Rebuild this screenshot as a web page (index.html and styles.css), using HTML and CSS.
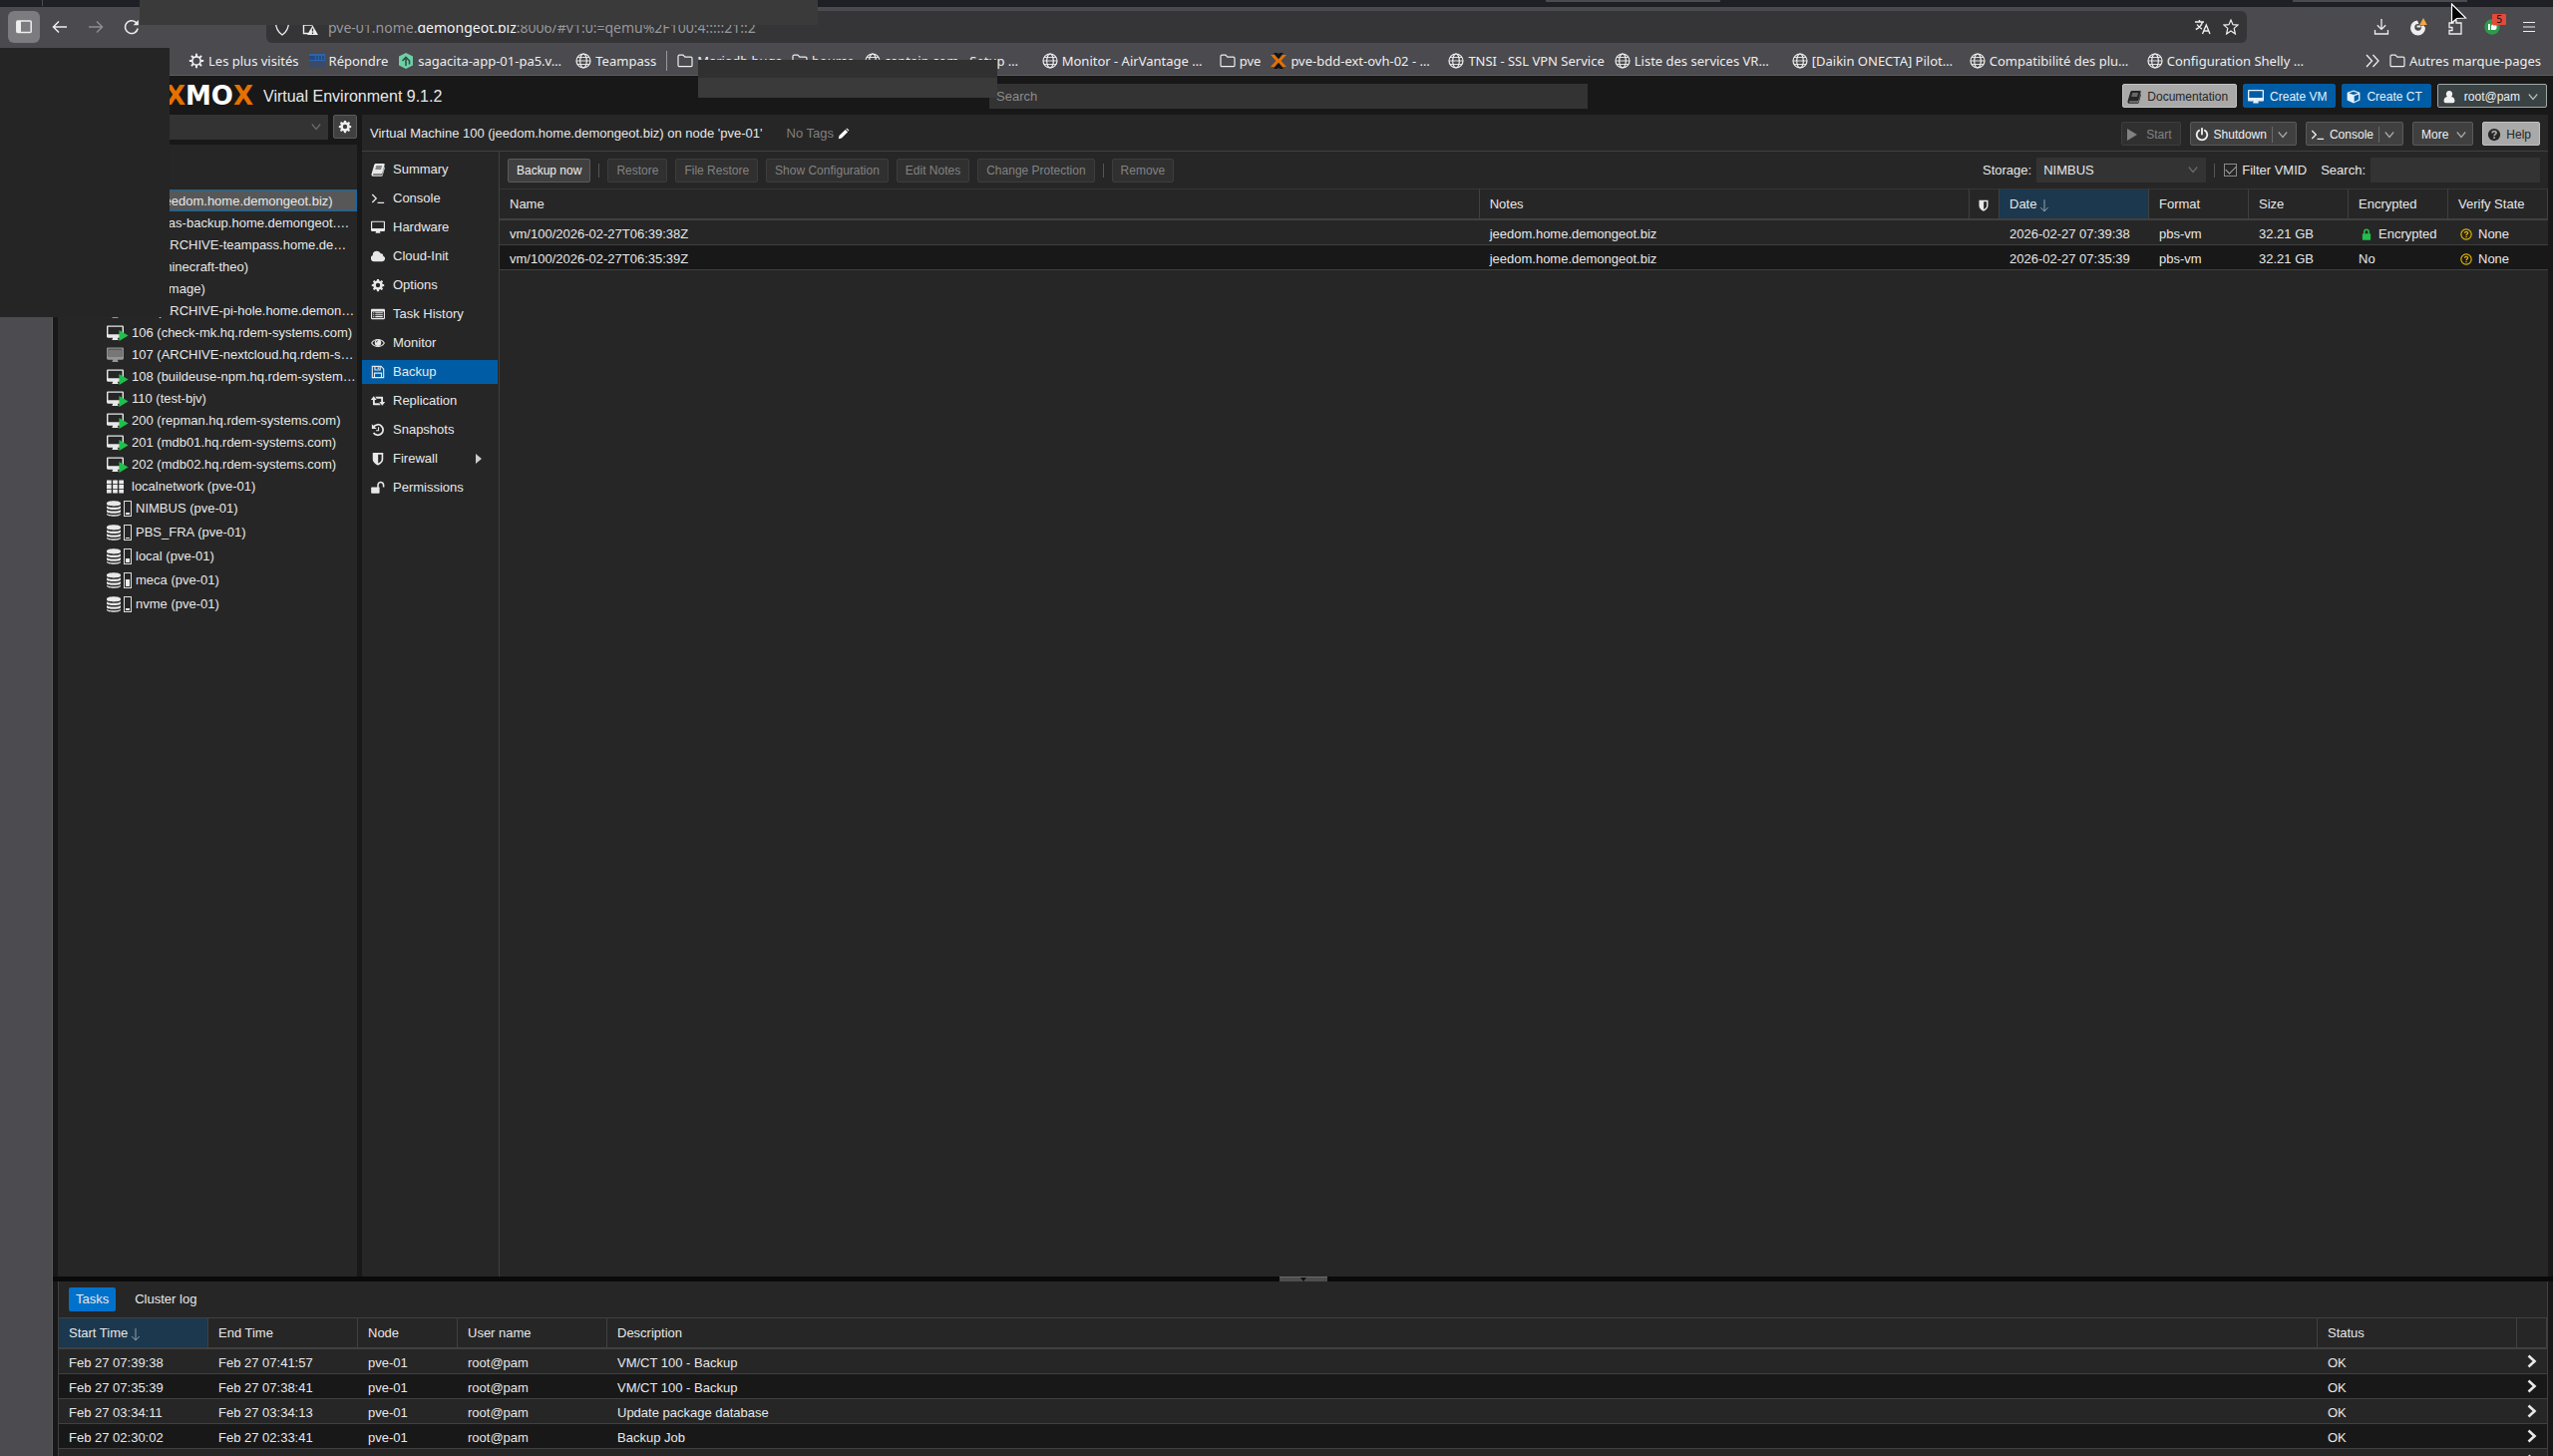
FILE: index.html
```html
<!DOCTYPE html>
<html lang="en">
<head>
<meta charset="utf-8">
<title>pve-01 - Proxmox Virtual Environment</title>
<link rel="stylesheet" href="styles.css">
</head>
<body>
<svg class="sprite" aria-hidden="true">
  <symbol id="globe" viewBox="0 0 16 16"><g fill="none" stroke="currentColor" stroke-width="1.2"><circle cx="8" cy="8" r="7"/><ellipse cx="8" cy="8" rx="3.3" ry="7"/><path d="M1 8h14M2 4.5h12M2 11.500h12" stroke-width=".9"/></g></symbol>
  <symbol id="folder" viewBox="0 0 16 16"><path d="M1 3.500a1.300 1.300 0 0 1 1.300-1.300H6l1.800 1.900h5.800A1.300 1.300 0 0 1 15 5.400v7a1.300 1.300 0 0 1-1.300 1.300H2.300A1.300 1.300 0 0 1 1 12.400z" fill="none" stroke="currentColor" stroke-width="1.200"/></symbol>
  <symbol id="gear-line" viewBox="0 0 16 16"><g fill="none" stroke="currentColor"><circle cx="8" cy="8" r="4.200" stroke-width="1.700"/><path d="M8 .8v3M8 12.200v3M.8 8h3M12.200 8h3M2.900 2.900l2.100 2.100M11 11l2.100 2.100M2.900 13.100L5 11M11 5l2.100-2.100" stroke-width="2"/></g></symbol>
  <symbol id="gear" viewBox="0 0 16 16"><path fill="currentColor" fill-rule="evenodd" d="M6.900 1h2.200l.4 1.900 1.200.5 1.600-1.100 1.500 1.500-1.100 1.600.5 1.200 1.900.4v2.100l-1.900.4-.5 1.200 1.100 1.600-1.500 1.500-1.600-1.100-1.200.5-.4 1.900H6.900l-.4-1.900-1.200-.5-1.600 1.100-1.500-1.500 1.100-1.600-.5-1.200L.9 9.100V7l1.900-.4.5-1.200-1.100-1.600 1.500-1.500 1.600 1.100 1.200-.5zM8 5.500a2.500 2.500 0 1 0 0 5 2.500 2.500 0 0 0 0-5z"/></symbol>
  <symbol id="book" viewBox="0 0 16 16"><path fill="currentColor" fill-rule="evenodd" d="M5.600 1.200h9c.8 0 1.200.6 1 1.300l-2.500 9.600c-.2.700-.8 1.100-1.500 1.100H3c-.4 0-.8.2-.8.600s.3.500.7.500h8.900c.7 0 1.100-.4 1.300-1l2.200-8.500c.5.400.6.900.5 1.400l-2.300 8.200c-.2.800-1 1.400-1.800 1.400H2.900C1.300 15.800.2 14.400.6 13L3.500 3C3.800 1.900 4.600 1.200 5.600 1.200zM6 4l-.3 1h6.600l.3-1zm-.7 2.300-.3 1h6.600l.3-1z"/></symbol>
  <symbol id="terminal" viewBox="0 0 16 16"><path d="M1.500 3.500 6 8l-4.500 4.500M7.500 13H15" fill="none" stroke="currentColor" stroke-width="1.500"/></symbol>
  <symbol id="screen" viewBox="0 0 18 16"><path fill="currentColor" fill-rule="evenodd" d="M1.300 0h15.400c.7 0 1.300.6 1.300 1.300v10.500c0 .7-.6 1.200-1.300 1.200h-5.200c0 .9.700 1.100.7 1.800 0 .3-.2.600-.5.600h-5.400c-.3 0-.5-.3-.5-.6 0-.7.700-.9.700-1.800H1.300C.6 13 0 12.500 0 11.800V1.300C0 .6.600 0 1.300 0zm.2 1.400v7.800h15V1.400z"/></symbol>
  <symbol id="screen-full" viewBox="0 0 18 16"><path fill="#777" d="M2 2h14v8H2z"/><path fill="currentColor" fill-rule="evenodd" d="M1.300 0h15.400c.7 0 1.300.6 1.300 1.300v10.500c0 .7-.6 1.200-1.300 1.200h-5.200c0 .9.700 1.100.7 1.800 0 .3-.2.600-.5.600h-5.400c-.3 0-.5-.3-.5-.6 0-.7.700-.9.700-1.800H1.300C.6 13 0 12.500 0 11.800V1.300C0 .6.600 0 1.300 0zm.4 1.500v8.400h14.600V1.500z"/></symbol>
  <symbol id="play" viewBox="0 0 10 12"><path fill="currentColor" d="M0 0l10 6-10 6z"/></symbol>
  <symbol id="cloud" viewBox="0 0 16 16"><path fill="currentColor" d="M3.700 14A3.700 3.700 0 0 1 2 6.900 4.800 4.800 0 0 1 11.200 4.900c1.900-.3 3 1 2.700 2.700A3.300 3.300 0 0 1 13 14z"/></symbol>
  <symbol id="list" viewBox="0 0 16 16"><path fill="currentColor" fill-rule="evenodd" d="M1.300 2h13.400c.7 0 1.300.6 1.300 1.300v9.400c0 .7-.6 1.300-1.300 1.300H1.300C.6 14 0 13.400 0 12.700V3.300C0 2.600.6 2 1.300 2zm0 3v7.700h13.400V5zM2.500 6h1.300v1.200H2.500zm2.400 0h8.600v1.200H4.900zM2.500 8.200h1.300v1.200H2.500zm2.400 0h8.600v1.200H4.900zM2.500 10.400h1.300v1.200H2.500zm2.400 0h8.600v1.200H4.900z"/></symbol>
  <symbol id="eye" viewBox="0 0 16 16"><path d="M.8 8C4 2.700 12 2.700 15.200 8 12 13.300 4 13.300.8 8z" fill="none" stroke="currentColor" stroke-width="1.300"/><circle cx="8" cy="7.600" r="3.700" fill="currentColor"/><path d="M6 7.300a2 2 0 0 1 2-2" fill="none" stroke="#262626" stroke-width=".9"/></symbol>
  <symbol id="floppy" viewBox="0 0 16 16"><path d="M1.500 1.500h10l3 3v10h-13zM4 14.500V9.300h8v5.200M4.500 1.500v4.200h6V1.500M8.300 2.500v2" fill="none" stroke="currentColor" stroke-width="1.300"/></symbol>
  <symbol id="retweet" viewBox="0 0 18 16"><path fill="currentColor" d="M3.500 2 7.300 6.700H4.900v4.100h5.800L12.500 13.400H3.300c-.4 0-.8-.3-.8-.8V6.700H-.2zM14.500 14 10.700 9.300h2.400V5.200H7.300L5.500 2.600h9.200c.4 0 .8.300.8.800v5.900h2.700z"/></symbol>
  <symbol id="history" viewBox="0 0 16 16"><path d="M3.200 4.200a6 6 0 1 1-.3 7.200" fill="none" stroke="currentColor" stroke-width="2"/><path d="M1 1.300v5.500h5.500z" fill="currentColor"/><path d="M8.600 4.800v4H5.800" fill="none" stroke="currentColor" stroke-width="1.300"/></symbol>
  <symbol id="shield" viewBox="0 0 16 16"><path fill="currentColor" fill-rule="evenodd" d="M2 1h12v7.500c0 3.500-3.500 5.800-6 7-2.500-1.200-6-3.500-6-7zm6.200 2v10.200c2-1 3.900-2.700 3.900-4.700V3z"/></symbol>
  <symbol id="unlock" viewBox="0 0 16 16"><path fill="currentColor" d="M1 7.500h8.800v6.200c0 .5-.4.800-.8.800H1c-.5 0-.8-.3-.8-.8V8.300c0-.5.300-.8.800-.8z"/><path d="M8 8V5a3.200 3.200 0 0 1 6.400 0v2.500" fill="none" stroke="currentColor" stroke-width="1.800"/></symbol>
  <symbol id="lock" viewBox="0 0 16 16"><rect x="2.500" y="7" width="11" height="8.500" rx=".8" fill="currentColor"/><path d="M5 7.500V4.700a3 3 0 0 1 6 0v2.800" fill="none" stroke="currentColor" stroke-width="2"/></symbol>
  <symbol id="grid" viewBox="0 0 18 16"><path fill="currentColor" d="M0 1h5v4H0zM6.500 1h5v4h-5zM13 1h5v4h-5zM0 6h5v4H0zM6.500 6h5v4h-5zM13 6h5v4h-5zM0 11h5v4H0zM6.500 11h5v4h-5zM13 11h5v4h-5z"/></symbol>
  <symbol id="db" viewBox="0 0 14 16"><path fill="currentColor" d="M0 2.500C0-.5 14-.5 14 2.500v1C14 6 0 6 0 3.500zM0 5.300c1.500 2 12.500 2 14 0v1.900c0 2.500-14 2.500-14 0zM0 9c1.500 2 12.500 2 14 0v1.900c0 2.500-14 2.500-14 0zM0 12.700c1.500 2 12.500 2 14 0v.9c0 3-14 3-14 0z"/></symbol>
  <symbol id="cube" viewBox="0 0 16 16"><path fill="currentColor" fill-rule="evenodd" d="M8 .5 15.300 3v9L8 15.500.7 12V3zM8 2 2.800 3.900 8 5.800l5.200-1.900zm.8 5.200v6.400l5-2.400V5.300z"/></symbol>
  <symbol id="user" viewBox="0 0 16 16"><path fill="currentColor" d="M8 1c2.200 0 3.600 1.600 3.600 3.800 0 1.300-.5 2.500-1.300 3.200 2.700.3 3.900 1.800 3.900 4.800 0 1.400-.8 2.200-2.200 2.200H4c-1.400 0-2.200-.8-2.200-2.200 0-3 1.200-4.500 3.900-4.800-.8-.7-1.300-1.900-1.300-3.200C4.400 2.600 5.800 1 8 1z"/></symbol>
  <symbol id="power" viewBox="0 0 16 16"><path d="M4.700 3.200a6 6 0 1 0 6.600 0M8 1v6.500" fill="none" stroke="currentColor" stroke-width="2.100" stroke-linecap="round"/></symbol>
  <symbol id="chevron" viewBox="0 0 10 10"><path d="M.8 2.500 5 7.500l4.200-5" fill="none" stroke="currentColor" stroke-width="1.200"/></symbol>
  <symbol id="help" viewBox="0 0 16 16"><circle cx="8" cy="8" r="7" fill="currentColor"/><path d="M5.700 6.200c.2-2.800 4.700-2.700 4.700-.2 0 1.700-2.300 1.500-2.300 3.300M8.100 10.500v2" fill="none" stroke="#a9a9a9" stroke-width="1.900"/></symbol>
  <symbol id="query" viewBox="0 0 16 16"><circle cx="8" cy="8" r="6.900" fill="none" stroke="currentColor" stroke-width="1.500"/><path d="M5.800 6.400c.2-2.500 4.400-2.400 4.400-.2 0 1.500-2.100 1.400-2.100 3.100M8.100 10.400v1.800" fill="none" stroke="currentColor" stroke-width="1.600"/></symbol>
  <symbol id="pencil" viewBox="0 0 16 16"><path fill="currentColor" d="M1 15l1-4.200L10.300 2.500l3.200 3.200L5.200 14zM11.200 1.600c.8-.8 1.400-.8 2 0l1.300 1.200c.7.700.7 1.300 0 2z"/></symbol>
  <symbol id="sort" viewBox="0 0 12 16"><path d="M6 1v14M1.500 10.500 6 15l4.500-4.500" fill="none" stroke="currentColor"/></symbol>
  <symbol id="next" viewBox="0 0 10 14"><path d="M1.500 1.500 7.500 7l-6 5.500" fill="none" stroke="currentColor" stroke-width="2.600"/></symbol>
</svg>

<div class="window">
  <header class="browser">
    <div class="tabstrip"><i class="tab-mark"></i><i class="tab-edge"></i><i class="tab-edge far"></i></div>
    <div class="toolbar">
      <nav class="tools">
        <button class="tool active" aria-label="Sidebar"><svg width="16" height="16" viewBox="0 0 16 16"><rect x=".8" y="2" width="14.400" height="11.500" rx="1" fill="none" stroke="currentColor" stroke-width="1.500"/><path d="M1 2h4v11.500H1z" fill="currentColor"/></svg></button>
        <button class="tool" aria-label="Back"><svg width="16" height="16" viewBox="0 0 16 16"><path d="M15 8H1.500M7 2.500 1.500 8 7 13.500" fill="none" stroke="currentColor" stroke-width="1.500"/></svg></button>
        <button class="tool dim" aria-label="Forward"><svg width="16" height="16" viewBox="0 0 16 16"><path d="M1 8h13.500M9 2.500 14.500 8 9 13.500" fill="none" stroke="currentColor" stroke-width="1.500"/></svg></button>
        <button class="tool" aria-label="Reload"><svg width="16" height="16" viewBox="0 0 16 16"><path d="M14.200 9.500A6.400 6.400 0 1 1 12 3.200l1.600 1.600" fill="none" stroke="currentColor" stroke-width="1.500"/><path d="M14.800 1v5.200H9.600z" fill="currentColor"/></svg></button>
      </nav>
      <div class="urlbar">
        <svg width="16" height="18" viewBox="0 0 16 18"><path d="M1.500 4 8 1.500 14.500 4c0 6-2 10-6.500 13C3.500 14 1.500 10 1.500 4z" fill="none" stroke="currentColor" stroke-width="1.300"/></svg>
        <svg class="site-lock" width="16" height="18" viewBox="0 0 16 18"><path d="M4 7V4a3 3 0 0 1 6 0v3M6 15.500H1.500V7h9" fill="none" stroke="currentColor" stroke-width="1.400"/><path d="M10.500 7.500 16 17H5z" fill="currentColor"/><path d="M10.500 10.500v3M10.500 14.500v1.500" stroke="#38383a" stroke-width="1.300"/></svg>
        <span class="url" role="textbox" aria-label="Address">pve-01.home.<b>demongeot.biz</b>:8006/#v1:0:=qemu%2F100:4:::::21::2</span>
        <button class="url-tool" aria-label="Translate"><svg width="16" height="16" viewBox="0 0 16 16"><path d="M0 3h9M4.500 1v2M7.500 3C6.500 6.500 4 9 .8 10.500M2 5.500C3.500 8 5 9 7 10M7.500 15 11.300 6l3.700 9M9 12h5" fill="none" stroke="currentColor" stroke-width="1.400"/></svg></button>
        <button class="url-tool" aria-label="Bookmark"><svg width="16" height="16" viewBox="0 0 16 16"><path d="M8 1l2 4.700 5 .4-3.800 3.300L12.400 15 8 12l-4.400 3 1.200-5.600L1 6.100l5-.4z" fill="none" stroke="currentColor" stroke-width="1.200"/></svg></button>
      </div>
      <nav class="tools exts">
        <button class="tool" aria-label="Downloads"><svg width="16" height="16" viewBox="0 0 16 16"><path d="M8 0v10M3.800 6.200 8 10.400l4.200-4.200M1.500 11v4h13v-4" fill="none" stroke="currentColor" stroke-width="1.300"/></svg></button>
        <button class="tool" aria-label="Extension"><svg width="18" height="18" viewBox="0 0 18 18"><path d="M8 2.500a7.500 7.500 0 1 0 8 7.500l-1.500-2.500-2.500.2c.6 3-1 5-3.500 5S4.800 10.500 5.500 8c.3-1.500 1.800-2 4-2z" fill="currentColor"/><path d="M7.500 8.500h4" stroke="currentColor" stroke-width="2"/><path d="M14 0l3.800 7h-7.600z" fill="#f5a742"/></svg></button>
        <button class="tool" aria-label="Extensions"><svg width="16" height="16" viewBox="0 0 16 16"><path d="M2 4h4V1.500h3V4h5v11H2v-3.500h3v-3H2z" fill="none" stroke="currentColor" stroke-width="1.300"/></svg></button>
        <button class="tool" aria-label="Ad blocker"><svg width="16" height="16" viewBox="0 0 16 16"><circle cx="8" cy="8" r="7.700" fill="#2e9a4c"/><path d="M4 5h2v6H4zM7 11V7l2-3v2.500h3.500V9c0 1.200-.8 2-2 2z" fill="#fff"/></svg><span class="badge">5</span></button>
        <button class="tool" aria-label="Menu"><svg width="16" height="16" viewBox="0 0 16 16"><path d="M2 3.500h12M2 8h12M2 12.500h12" stroke="currentColor" stroke-width="1.200"/></svg></button>
      </nav>
    </div>
    <nav class="bookmarks">
      <span class="bm-cut">.</span>
      <a href="#"><svg class="i16"><use href="#gear-line"/></svg>Les plus visités</a>
      <a href="#"><svg class="i16" viewBox="0 0 16 16"><path d="M0 1h16v14H0z" fill="#3b4a6b"/><path d="M0 1h16v7H0z" fill="#2f64a8"/><path d="M1 3v4M3 3v4M5 3v4M8 3v4M11 3v4M14 3v4" stroke="#193a72" stroke-width="1.200"/></svg>Répondre</a>
      <a class="full" href="#"><svg class="i16" viewBox="0 0 16 16"><path d="M8 0l7 3.500v9L8 16l-7-3.500v-9z" fill="#6fcfa5"/><path d="M8 13V5M4.500 8 8 4.500 11.500 8v3.500" fill="none" stroke="#2d5148" stroke-width="1.600"/></svg>sagacita-app-01-pa5.v…</a>
      <a href="#"><svg class="i16"><use href="#globe"/></svg>Teampass</a>
      <i class="bm-sep"></i>
      <a href="#"><svg class="i16"><use href="#folder"/></svg>Mariadb bugs</a>
      <a href="#"><svg class="i16"><use href="#folder"/></svg>bourse</a>
      <a class="full" href="#"><svg class="i16"><use href="#globe"/></svg>captain.com - Setup …</a>
      <a class="full" href="#"><svg class="i16"><use href="#globe"/></svg>Monitor - AirVantage …</a>
      <a href="#"><svg class="i16"><use href="#folder"/></svg>pve</a>
      <a class="full" href="#"><svg class="i16" viewBox="0 0 16 16"><path d="M0 2h4l4 4.500L12 2h4l-5.500 6 5.500 6h-4L8 9.500 4 14H0l5.500-6z" fill="#e57000"/><path d="M3 0h4l1 1.500L9 0h4L8 6zM3 16h4l1-1.500L9 16h4l-5-6z" fill="#111"/></svg>pve-bdd-ext-ovh-02 - …</a>
      <a href="#"><svg class="i16"><use href="#globe"/></svg>TNSI - SSL VPN Service</a>
      <a class="full" href="#"><svg class="i16"><use href="#globe"/></svg>Liste des services VR…</a>
      <a class="full" href="#"><svg class="i16"><use href="#globe"/></svg>[Daikin ONECTA] Pilot…</a>
      <a class="full" href="#"><svg class="i16"><use href="#globe"/></svg>Compatibilité des plu…</a>
      <a class="full" href="#"><svg class="i16"><use href="#globe"/></svg>Configuration Shelly …</a>
      <button class="bm-more" aria-label="More bookmarks"><svg width="14" height="14" viewBox="0 0 14 14"><path d="M1 1l5.500 6L1 13M7.500 1 13 7l-5.500 6" fill="none" stroke="currentColor" stroke-width="1.300"/></svg></button>
      <a href="#"><svg class="i16"><use href="#folder"/></svg>Autres marque-pages</a>
    </nav>
  </header>

  <div class="below">
    <aside class="browser-side"></aside>
    <div class="app">
      <header class="app-head">
        <div class="logo"><b>PRO</b><em>X</em><b>MO</b><em>X</em></div>
        <div class="product">Virtual Environment 9.1.2</div>
        <input class="global-search" type="text" placeholder="Search" aria-label="Search">
        <div class="head-buttons">
          <button class="btn light"><svg class="i14"><use href="#book"/></svg>Documentation</button>
          <button class="btn blue"><svg class="i16"><use href="#screen"/></svg>Create VM</button>
          <button class="btn blue"><svg class="i14"><use href="#cube"/></svg>Create CT</button>
          <button class="btn account"><svg class="i14"><use href="#user"/></svg>root@pam<svg class="i10"><use href="#chevron"/></svg></button>
        </div>
      </header>

      <div class="workspace">
        <aside class="resources">
          <div class="view-row">
            <select class="view" aria-label="View"><option></option></select>
            <svg class="i10 view-arrow"><use href="#chevron"/></svg>
            <button class="btn square" aria-label="Settings"><svg class="i14"><use href="#gear"/></svg></button>
          </div>
          <ul class="tree">
            <li class="selected"><a href="#"><svg class="vm"><use href="#screen"/></svg>100 (jeedom.home.demongeot.biz)</a></li>
            <li><a href="#"><svg class="vm"><use href="#screen"/></svg>101 (nas-backup.home.demongeot.…</a></li>
            <li><a href="#"><svg class="vm off"><use href="#screen-full"/></svg>102 (ARCHIVE-teampass.home.de…</a></li>
            <li><a href="#"><svg class="vm"><use href="#screen"/></svg>103 (minecraft-theo)</a></li>
            <li><a href="#"><svg class="vm"><use href="#screen"/></svg>104 (nmage)</a></li>
            <li><a href="#"><svg class="vm off"><use href="#screen-full"/></svg>105 (ARCHIVE-pi-hole.home.demon…</a></li>
            <li class="run"><a href="#"><svg class="vm"><use href="#screen"/></svg><svg class="go"><use href="#play"/></svg>106 (check-mk.hq.rdem-systems.com)</a></li>
            <li><a href="#"><svg class="vm off"><use href="#screen-full"/></svg>107 (ARCHIVE-nextcloud.hq.rdem-s…</a></li>
            <li class="run"><a href="#"><svg class="vm"><use href="#screen"/></svg><svg class="go"><use href="#play"/></svg>108 (buildeuse-npm.hq.rdem-system…</a></li>
            <li class="run"><a href="#"><svg class="vm"><use href="#screen"/></svg><svg class="go"><use href="#play"/></svg>110 (test-bjv)</a></li>
            <li class="run"><a href="#"><svg class="vm"><use href="#screen"/></svg><svg class="go"><use href="#play"/></svg>200 (repman.hq.rdem-systems.com)</a></li>
            <li class="run"><a href="#"><svg class="vm"><use href="#screen"/></svg><svg class="go"><use href="#play"/></svg>201 (mdb01.hq.rdem-systems.com)</a></li>
            <li class="run"><a href="#"><svg class="vm"><use href="#screen"/></svg><svg class="go"><use href="#play"/></svg>202 (mdb02.hq.rdem-systems.com)</a></li>
            <li><a href="#"><svg class="vm"><use href="#grid"/></svg>localnetwork (pve-01)</a></li>
            <li class="store"><a href="#"><svg class="disk"><use href="#db"/></svg><span class="meter"><i style="height:20%"></i></span>NIMBUS (pve-01)</a></li>
            <li class="store"><a href="#"><svg class="disk"><use href="#db"/></svg><span class="meter"><i style="height:10%"></i></span>PBS_FRA (pve-01)</a></li>
            <li class="store"><a href="#"><svg class="disk"><use href="#db"/></svg><span class="meter"><i style="height:30%"></i></span>local (pve-01)</a></li>
            <li class="store"><a href="#"><svg class="disk"><use href="#db"/></svg><span class="meter"><i style="height:60%"></i></span>meca (pve-01)</a></li>
            <li class="store"><a href="#"><svg class="disk"><use href="#db"/></svg><span class="meter"><i style="height:20%"></i></span>nvme (pve-01)</a></li>
          </ul>
        </aside>

        <main class="vm-panel">
          <div class="title-row">
            <h1>Virtual Machine 100 (jeedom.home.demongeot.biz) on node 'pve-01'</h1>
            <span class="tags">No Tags <svg class="i12"><use href="#pencil"/></svg></span>
            <div class="actions">
              <button class="btn" disabled><svg class="i12"><use href="#play"/></svg>Start</button>
              <button class="btn split"><svg class="i14"><use href="#power"/></svg>Shutdown<i></i><svg class="i10"><use href="#chevron"/></svg></button>
              <button class="btn split"><svg class="i14"><use href="#terminal"/></svg>Console<i></i><svg class="i10"><use href="#chevron"/></svg></button>
              <button class="btn more">More<svg class="i10"><use href="#chevron"/></svg></button>
              <button class="btn light"><svg class="i14"><use href="#help"/></svg>Help</button>
            </div>
          </div>
          <div class="vm-body">
            <nav class="sections">
              <a href="#"><svg class="i14"><use href="#book"/></svg>Summary</a>
              <a href="#"><svg class="i14"><use href="#terminal"/></svg>Console</a>
              <a href="#"><svg class="i14"><use href="#screen"/></svg>Hardware</a>
              <a href="#"><svg class="i14"><use href="#cloud"/></svg>Cloud-Init</a>
              <a href="#"><svg class="i14"><use href="#gear"/></svg>Options</a>
              <a href="#"><svg class="i14"><use href="#list"/></svg>Task History</a>
              <a href="#"><svg class="i14"><use href="#eye"/></svg>Monitor</a>
              <a class="current" href="#"><svg class="i14"><use href="#floppy"/></svg>Backup</a>
              <a href="#"><svg class="i14"><use href="#retweet"/></svg>Replication</a>
              <a href="#"><svg class="i14"><use href="#history"/></svg>Snapshots</a>
              <a href="#"><svg class="i14"><use href="#shield"/></svg>Firewall<svg class="expand" viewBox="0 0 6 10"><path d="M0 0l6 5-6 5z" fill="currentColor"/></svg></a>
              <a href="#"><svg class="i14"><use href="#unlock"/></svg>Permissions</a>
            </nav>
            <section class="backups">
              <div class="grid-tools">
                <button class="btn">Backup now</button><i class="sep"></i>
                <button class="btn" disabled>Restore</button>
                <button class="btn" disabled>File Restore</button>
                <button class="btn" disabled>Show Configuration</button>
                <button class="btn" disabled>Edit Notes</button>
                <button class="btn" disabled>Change Protection</button><i class="sep"></i>
                <button class="btn" disabled>Remove</button>
                <div class="filters">
                  <label for="storage">Storage:</label>
                  <span class="combo"><select id="storage"><option>NIMBUS</option></select><svg class="i10"><use href="#chevron"/></svg></span>
                  <i class="sep"></i>
                  <input type="checkbox" id="vmid" checked><label for="vmid">Filter VMID</label>
                  <label class="find-label" for="find">Search:</label><input type="text" id="find">
                </div>
              </div>
              <table>
                <colgroup><col><col><col><col class="w30"><col class="w150"><col class="w100"><col class="w100"><col class="w100"><col class="w100"></colgroup>
                <thead><tr><th colspan="2">Name</th><th>Notes</th><th class="flag" aria-label="Protected"><svg class="i12"><use href="#shield"/></svg></th><th class="sorted">Date <svg class="arrow"><use href="#sort"/></svg></th><th>Format</th><th>Size</th><th>Encrypted</th><th>Verify State</th></tr></thead>
                <tbody>
                  <tr><td colspan="2">vm/100/2026-02-27T06:39:38Z</td><td>jeedom.home.demongeot.biz</td><td></td><td>2026-02-27 07:39:38</td><td>pbs-vm</td><td>32.21 GB</td><td><svg class="i12 ok"><use href="#lock"/></svg>Encrypted</td><td><svg class="i12 warn"><use href="#query"/></svg>None</td></tr>
                  <tr><td colspan="2">vm/100/2026-02-27T06:35:39Z</td><td>jeedom.home.demongeot.biz</td><td></td><td>2026-02-27 07:35:39</td><td>pbs-vm</td><td>32.21 GB</td><td>No</td><td><svg class="i12 warn"><use href="#query"/></svg>None</td></tr>
                </tbody>
              </table>
            </section>
          </div>
        </main>
      </div>

      <div class="splitter"><button class="handle" aria-label="Collapse log"><svg width="6" height="4" viewBox="0 0 6 4"><path d="M0 0h6L3 4z" fill="#111"/></svg></button></div>

      <section class="log">
        <div class="log-tabs"><button class="tab on">Tasks</button><button class="tab">Cluster log</button></div>
        <table>
          <colgroup><col class="w150"><col class="w150"><col class="w100"><col class="w150"><col><col class="w200"><col class="w30"></colgroup>
          <thead><tr><th class="sorted">Start Time <svg class="arrow"><use href="#sort"/></svg></th><th>End Time</th><th>Node</th><th>User name</th><th>Description</th><th>Status</th><th></th></tr></thead>
          <tbody>
            <tr><td>Feb 27 07:39:38</td><td>Feb 27 07:41:57</td><td>pve-01</td><td>root@pam</td><td>VM/CT 100 - Backup</td><td>OK</td><td class="go-cell"><svg class="open"><use href="#next"/></svg></td></tr>
            <tr><td>Feb 27 07:35:39</td><td>Feb 27 07:38:41</td><td>pve-01</td><td>root@pam</td><td>VM/CT 100 - Backup</td><td>OK</td><td class="go-cell"><svg class="open"><use href="#next"/></svg></td></tr>
            <tr><td>Feb 27 03:34:11</td><td>Feb 27 03:34:13</td><td>pve-01</td><td>root@pam</td><td>Update package database</td><td>OK</td><td class="go-cell"><svg class="open"><use href="#next"/></svg></td></tr>
            <tr><td>Feb 27 02:30:02</td><td>Feb 27 02:33:41</td><td>pve-01</td><td>root@pam</td><td>Backup Job</td><td>OK</td><td class="go-cell"><svg class="open"><use href="#next"/></svg></td></tr>
            <tr><td></td><td></td><td></td><td></td><td></td><td></td><td class="go-cell"><svg class="open"><use href="#next"/></svg></td></tr>
          </tbody>
        </table>
      </section>
    </div>
  </div>

  <div class="cover cover-tabs"></div>
  <div class="cover cover-tree"></div>
  <div class="cover cover-marks"></div>
  <svg class="pointer" viewBox="0 0 16 22"><path d="M1 1v19l5-4.500L15 15z" fill="#000" stroke="#fff" stroke-width="1.200"/></svg>
</div>
</body>
</html>
```
FILE: styles.css
```css
* { box-sizing: border-box; }

body {
  margin: 0;
  background: #181818;
  color: #e8e8e8;
  font: 13px/16px "Liberation Sans", Arial, sans-serif;
}

a { color: inherit; text-decoration: none; }
button, input, select { font: inherit; color: inherit; margin: 0; border: 0; padding: 0; background: none; }
svg { flex: none; }
.sprite { position: absolute; width: 0; height: 0; }
.i16 { width: 16px; height: 16px; }
.i14 { width: 14px; height: 14px; }
.i12 { width: 12px; height: 12px; }
.i10 { width: 10px; height: 10px; }

.window { position: relative; display: flex; flex-direction: column; height: 100vh; overflow: hidden; }

/* Browser chrome */
.browser { background: #4a4a4f; border-bottom: 1px solid #5e5e62; color: #eee; font-family: "Noto Sans", sans-serif; }
.tabstrip { display: flex; height: 7px; background: #1f1f26; padding: 0 86px 0 42px; }
.tab-mark { width: 1px; height: 6px; background: #4a4a4f; }
.tab-edge { width: 175px; height: 2px; margin-left: auto; background: #4a4a4f; }
.tab-edge.far { margin-left: 574px; }
.toolbar { display: flex; align-items: center; height: 40px; padding: 0 8px 0 6px; }
.tools { display: flex; gap: 4px; padding-left: 2px; }
.tool { position: relative; display: grid; place-items: center; width: 32px; height: 32px; border-radius: 6px; }
.tool.active { background: #7b7b80; }
.tool.dim { color: #8e8e92; }
.badge { position: absolute; top: 3px; right: 2px; width: 14px; background: #e5493a; color: #111; font-size: 10px; line-height: 11px; border-radius: 1px; }
.urlbar { flex: 1; display: flex; align-items: center; height: 32px; margin-left: 119px; padding: 0 8px; background: #353537; border-radius: 6px; }
.site-lock { margin: 0 5px 0 12px; }
.url { flex: 1; color: #98989b; font-size: 14px; line-height: 20px; padding: 2px 0 0 5px; }
.url b { font-weight: 400; color: #f4f4f4; }
.url-tool { width: 28px; height: 28px; display: grid; place-items: center; }
.url-tool:last-child { margin-right: -6px; }
.exts { gap: 5px; margin-left: 117px; }
.bookmarks { display: flex; align-items: center; gap: 10px; height: 28px; padding: 0 12px 0 167px; overflow: hidden; white-space: nowrap; }
.bookmarks a { display: flex; align-items: center; gap: 4px; flex: none; }
.bookmarks .full { width: 168px; }
.bm-cut { width: 12px; }
.bm-sep { width: 1px; height: 20px; background: #9a9a9d; }
.bm-more { margin-left: auto; display: grid; }

/* Proxmox shell */
.below { flex: 1; display: flex; min-height: 0; }
.browser-side { width: 53px; background: #4b4b50; border-right: 1px solid #5a5a5e; }
.app { flex: 1; min-width: 0; display: flex; flex-direction: column; background: #181818; }
.app-head { display: flex; align-items: center; height: 39px; padding: 1px 6px 0 0; }
.logo { width: 201px; display: flex; justify-content: flex-end; overflow: hidden; font: bold 26px/28px "DejaVu Sans", sans-serif; }
.logo b { color: #fff; }
.logo em { font-style: normal; color: #e57000; }
.product { width: 728px; padding: 2px 0 0 10px; font-size: 16px; line-height: 20px; }
.global-search { width: 600px; height: 25px; margin-left: 10px; padding: 1px 7px 0; background: #333; }
.global-search::placeholder { color: #8c8c8c; opacity: 1; }
.head-buttons { display: flex; gap: 6px; margin-left: auto; }

.btn { display: flex; align-items: center; justify-content: center; height: 24px; padding: 1px 8px 0; border: 1px solid #5a5a5a; border-radius: 2px; background: #404040; color: #f0f0f0; font-size: 12px; white-space: nowrap; }
.btn:disabled { background: #303030; border-color: #3d3d3d; color: #828282; }
.btn.light { background: #a9a9a9; border-color: #c0c0c0; color: #262626; }
.btn.blue { background: #005da5; border-color: #005da5; color: #e4f1fb; gap: 5px; }
.btn.account { background: #3a4244; border-color: #a0a8a8; }
.head-buttons .btn { padding: 1px 8px 0 4px; gap: 6px; }
.actions .btn { padding: 1px 8px 0 4px; gap: 5px; }
.actions .btn:disabled, .actions .btn.more, .head-buttons .btn.account { gap: 8px; }
.actions .btn.more { padding-left: 8px; padding-right: 6px; }
.head-buttons .i10 { color: #bbb; }
.btn.square { width: 24px; padding: 0; }
.btn.split i { width: 1px; height: 16px; background: #6a6a6a; }

.workspace { flex: 1; display: flex; gap: 5px; min-height: 0; padding: 0 5px; }
.resources { width: 300px; display: flex; flex-direction: column; }
.view-row { display: flex; justify-content: space-between; position: relative; height: 30px; }
.view { width: 271px; height: 25px; background: #333; appearance: none; }
.view-arrow { position: absolute; right: 36px; top: 7px; color: #6b6b6b; }
.tree { flex: 1; margin: 0; padding: 45px 0 0; list-style: none; background: #262626; overflow: hidden; }
.tree a { display: flex; align-items: center; height: 22px; padding: 2px 0 0 49px; gap: 8px; white-space: nowrap; position: relative; }
.tree .selected { background: #575757; outline: 1px solid #1068a8; outline-offset: -1px; }
.vm { width: 17px; height: 16px; }
.vm.off { color: #959595; }
.go { position: absolute; left: 61px; top: 9px; width: 10px; height: 11px; color: #21bf4b; }
.tree .store a { height: 24px; padding-top: 0; gap: 3px; }
.disk { width: 14px; height: 16px; }
.meter { display: flex; align-items: flex-end; width: 8px; height: 16px; margin-right: 1px; padding: 1px; border: 1px solid #ddd; }
.meter i { width: 100%; background: #eee; }

.vm-panel { flex: 1; min-width: 0; display: flex; flex-direction: column; background: #262626; }
.title-row { display: flex; align-items: center; height: 37px; padding: 2px 8px 0; border-bottom: 1px solid #404040; }
h1 { margin: 0; font: inherit; }
.tags { display: flex; align-items: center; gap: 4px; margin-left: 24px; color: #808080; }
.tags svg { color: #fff; }
.actions { display: flex; gap: 9px; margin-left: auto; }
.actions .i10 { color: #aaa; }
.vm-body { flex: 1; display: flex; min-height: 0; }
.sections { width: 138px; display: flex; flex-direction: column; gap: 5px; padding: 6px 1px 0 0; border-right: 1px solid #404040; }
.sections a { display: flex; align-items: center; gap: 8px; height: 24px; padding-left: 9px; }
.sections .current { background: #005da5; }
.expand { width: 6px; height: 10px; margin-left: auto; margin-right: 16px; color: #ccc; }
.backups { flex: 1; min-width: 0; }
.grid-tools { display: flex; align-items: center; gap: 8px; height: 38px; padding: 0 8px; border-bottom: 1px solid #363636; }
.sep { width: 1px; height: 14px; background: #555; }
.filters { display: flex; align-items: center; margin-left: auto; }
.filters label { padding-top: 1px; }
.combo { position: relative; display: flex; margin-left: 5px; margin-right: 8px; }
.combo select { width: 170px; height: 25px; padding: 0 7px; background: #333; appearance: none; }
.combo svg { position: absolute; right: 8px; top: 7px; color: #6b6b6b; }
.filters input[type="checkbox"] { appearance: none; width: 13px; height: 13px; margin: 0 5px 0 9px; border: 1px solid #8a8a8a; display: grid; place-items: center; }
.filters input[type="checkbox"]::before { content: ""; width: 9px; height: 5px; margin-bottom: 3px; border: solid #a8a8a8; border-width: 0 0 1px 1px; rotate: -45deg; }
.find-label { margin: 0 5px 0 14px; }
#find { width: 170px; height: 25px; padding: 0 7px; background: #333; }

table { width: 100%; table-layout: fixed; border-collapse: separate; border-spacing: 0; }
.w30 { width: 30px; }
.w100 { width: 100px; }
.w150 { width: 150px; }
.w200 { width: 200px; }
th { height: 31px; padding: 1px 10px 0; border-right: 1px solid #404040; border-bottom: 2px solid #404040; font-weight: 400; text-align: left; white-space: nowrap; }
th svg { vertical-align: middle; }
th.flag { padding-left: 8px; }
.sorted { background: #1b384e; }
.arrow { width: 10px; height: 14px; color: #a9b8c4; margin-left: -1px; }
td { height: 25px; padding: 3px 10px 0; border-bottom: 1px solid #404040; white-space: nowrap; }
td svg { vertical-align: -2px; margin: 0 6px 0 2px; }
tbody tr:nth-child(even) { background: #181818; }
.ok { color: #21bf4b; }
.warn { color: #e6b800; }

.splitter { display: flex; justify-content: center; height: 5px; background: #0a0a0a; }
.handle { display: grid; place-items: center; width: 48px; height: 5px; background: #4d4d4d; border-top: 1px solid #6a6a6a; }
.log { height: 175px; margin: 0 5px; background: #262626; border: solid #404040; border-width: 0 1px; overflow: hidden; }
.log-tabs { display: flex; align-items: center; gap: 8px; height: 37px; padding-left: 10px; border-bottom: 1px solid #404040; }
.tab { height: 24px; padding: 0 7px; border-radius: 2px; }
.tab.on { background: #0072cc; margin-right: 4px; }
td.go-cell { padding-top: 0; line-height: 14px; }
.open { width: 10px; height: 14px; }
td .open { margin: 0; vertical-align: top; }

/* Panels floating over the window */
.cover { position: absolute; background: #3a3a3a; }
.cover-tabs { left: 140px; top: 0; width: 680px; height: 25px; }
.cover-tree { left: 0; top: 48px; width: 170px; height: 270px; background: #252525; }
.cover-marks { left: 700px; top: 60px; width: 300px; height: 38px; border-top: 18px solid #303030; }
.pointer { position: absolute; right: 86px; top: 3px; width: 17px; height: 22px; }
```
